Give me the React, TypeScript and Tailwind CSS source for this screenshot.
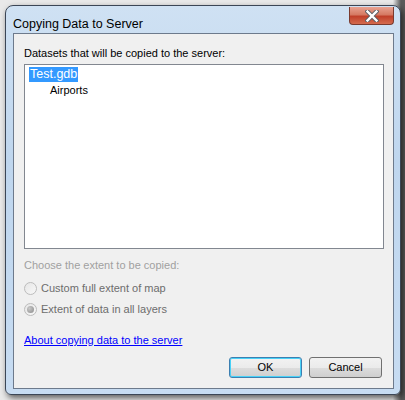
import React from "react";

export default function App() {
  const font = { fontFamily: '"Liberation Sans", Arial, sans-serif' };
  return (
    <div className="w-[405px] h-[400px] bg-[linear-gradient(90deg,#e9e9e9_0%,#e9e9e9_97%,#5a5a5a_99%)] overflow-hidden pl-[5px] pt-[5px]" style={font}>
      <div className="w-[396px] h-[390px] rounded-t-[8px] rounded-b-[6px] border border-[#3b4656] bg-[linear-gradient(180deg,#cfe1f3_0%,#bfd6ee_40%,#c7dcf2_100%)] shadow-[2px_3px_6px_rgba(0,0,0,0.6)] flex flex-col">
        <div className="h-[27px] flex items-start justify-between pl-[7px] pr-[6px] shrink-0">
          <div className="text-[12.5px] text-black mt-[11px] leading-[14px]">Copying Data to Server</div>
          <div className="mt-[1px] w-[45px] h-[18px] rounded-b-[4px] border border-[#7a3a2e] border-t-0 bg-[linear-gradient(180deg,#e8a291_0%,#d57a63_45%,#c0402a_55%,#d46b4e_100%)] flex items-center justify-center">
            <svg width="14" height="12" viewBox="0 0 14 12">
              <path d="M2.5 1.5 L11.5 10.5 M11.5 1.5 L2.5 10.5" stroke="#5a5e66" strokeWidth="4.2" strokeLinecap="square" />
              <path d="M2.5 1.5 L11.5 10.5 M11.5 1.5 L2.5 10.5" stroke="#ffffff" strokeWidth="2.4" strokeLinecap="square" />
            </svg>
          </div>
        </div>
        <div className="ml-[7px] mr-[6px] mb-[5px] flex-1 border border-[#6d7a8c] bg-[#f0f0f0] flex flex-col px-[10px]">
          <div className="text-[11px] text-black mt-[13px] leading-[13px]">Datasets that will be copied to the server:</div>
          <div className="mt-[4px] h-[185px] w-[360px] border border-[#828790] bg-white pt-[2px] pl-[4px]">
            <div className="w-fit bg-[#3399ff] text-white text-[12.5px] leading-[15px] px-[1px]">Test.gdb</div>
            <div className="text-[11px] text-black leading-[13px] mt-[2px] pl-[21px]">Airports</div>
          </div>
          <div className="text-[11px] text-[#a0a0a0] mt-[10px] leading-[13px]">Choose the extent to be copied:</div>
          <div className="flex items-center gap-[4px] mt-[9px] h-[14px]">
            <div className="w-[13px] h-[13px] rounded-full border border-[#bcbcbc] bg-[linear-gradient(135deg,#e6e6e6,#f8f8f8)]" />
            <span className="text-[11px] text-[#6d6d6d] leading-[13px]">Custom full extent of map</span>
          </div>
          <div className="flex items-center gap-[4px] mt-[7px] h-[14px]">
            <div className="w-[13px] h-[13px] rounded-full border border-[#bcbcbc] bg-[linear-gradient(135deg,#e6e6e6,#f8f8f8)] flex items-center justify-center">
              <div className="w-[7px] h-[7px] rounded-full bg-[radial-gradient(circle_at_35%_35%,#c8c8c8,#8a8a8a)]" />
            </div>
            <span className="text-[11px] text-[#6d6d6d] leading-[13px]">Extent of data in all layers</span>
          </div>
          <div className="mt-[18px] text-[11px] text-[#0000ff] underline leading-[13px]">About copying data to the server</div>
          <div className="flex justify-end gap-[7px] mt-[10px] pr-[1px]">
            <div className="w-[73px] h-[21px] rounded-[3px] border border-[#3c7fb1] shadow-[inset_0_0_0_1px_#48d1f7] bg-[linear-gradient(180deg,#f2f2f2_0%,#ebebeb_50%,#dddddd_51%,#cfcfcf_100%)] flex items-center justify-center text-[11px] text-black">OK</div>
            <div className="w-[73px] h-[21px] rounded-[3px] border border-[#707070] bg-[linear-gradient(180deg,#f2f2f2_0%,#ebebeb_50%,#dddddd_51%,#cfcfcf_100%)] flex items-center justify-center text-[11px] text-black">Cancel</div>
          </div>
        </div>
      </div>
    </div>
  );
}
